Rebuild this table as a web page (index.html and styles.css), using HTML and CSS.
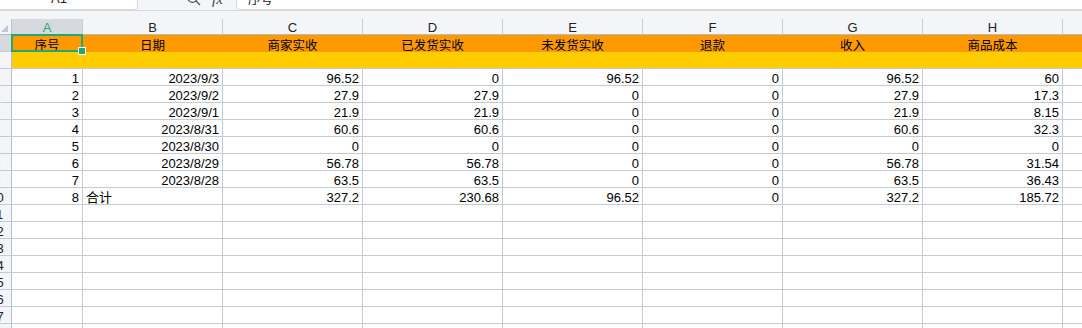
FILE: index.html
```html
<!DOCTYPE html>
<html lang="zh-CN">
<head>
    <meta charset="UTF-8">
    <meta name="viewport" content="width=device-width, initial-scale=1.0">
    <title>销售汇总</title>
    <link rel="stylesheet" href="styles.css">
</head>
<body>
    <!-- name box + formula input -->
    <div class="formula-bar">
        <div class="name-box">
            <span class="name-ref">A1</span>
            <svg class="name-arrow" width="8" height="6" viewBox="0 0 8 6"><path d="M1 1 L4 4 L7 1" fill="none" stroke="#777" stroke-width="1"/></svg>
        </div>
        <svg class="icon-search" width="16" height="16" viewBox="0 0 16 16">
            <circle cx="6.5" cy="6.5" r="4.8" fill="none" stroke="#555" stroke-width="1.2"/>
            <path d="M10 10 L14 14" stroke="#555" stroke-width="1.3"/>
        </svg>
        <span class="icon-fx">fx</span>
        <div class="formula-input">序号</div>
    </div>
    <div class="bar-gap"></div>

    <div class="sheet" id="sheet"></div>

    <script>
        var letters = ['A','B','C','D','E','F','G','H','I'];
        var titles = ['序号','日期','商家实收','已发货实收','未发货实收','退款','收入','商品成本',''];
        var rows = [
            ['1','2023/9/3','96.52','0','96.52','0','96.52','60'],
            ['2','2023/9/2','27.9','27.9','0','0','27.9','17.3'],
            ['3','2023/9/1','21.9','21.9','0','0','21.9','8.15'],
            ['4','2023/8/31','60.6','60.6','0','0','60.6','32.3'],
            ['5','2023/8/30','0','0','0','0','0','0'],
            ['6','2023/8/29','56.78','56.78','0','0','56.78','31.54'],
            ['7','2023/8/28','63.5','63.5','0','0','63.5','36.43'],
            ['8','合计','327.2','230.68','96.52','0','327.2','185.72']
        ];

        var sheet = document.getElementById('sheet');

        function addCell(cls, text) {
            var d = document.createElement('div');
            d.className = 'cell ' + cls;
            if (text) d.textContent = text;
            sheet.appendChild(d);
            return d;
        }

        // corner + column letters
        var corner = addCell('corner', '');
        corner.innerHTML = '<span class="corner-tri"></span>';
        for (var i = 0; i < letters.length; i++) {
            addCell(i == 0 ? 'colhead active' : 'colhead', letters[i]);
        }

        // row 1: titles, A1 is the active cell
        addCell('rowhead active', '1');
        for (var i = 0; i < titles.length; i++) {
            var t = addCell(i == 0 ? 'title current' : 'title', titles[i]);
            if (i == 0) {
                var sel = document.createElement('span');
                sel.className = 'selection';
                sel.innerHTML = '<span class="fill-handle"></span>';
                t.appendChild(sel);
            }
        }

        // row 2: blank band
        addCell('rowhead', '2');
        for (var i = 0; i < letters.length; i++) {
            addCell('band', '');
        }

        // data rows
        for (var r = 0; r < 16; r++) {
            addCell('rowhead', String(r + 3));
            var data = rows[r] || [];
            for (var c = 0; c < letters.length; c++) {
                var val = data[c] || '';
                var isText = val != '' && isNaN(val) && val.indexOf('/') < 0;
                addCell(isText ? 'text' : '', val);
            }
        }
    </script>
</body>
</html>
```

FILE: styles.css
```css
body{
    margin: 0;
    overflow: hidden;
    background: #fff;
    font-family: "Liberation Sans", "Noto Sans CJK SC", sans-serif;
    font-size: 13px;
    color: #000;
}

/* formula bar (scrolled so only its lower edge shows) */
.formula-bar{
    height: 10px;
    display: flex;
    align-items: center;
    overflow: hidden;
    background: #f4f5f7;
    border-bottom: 1px solid #d6d9df;
}
.name-box{
    box-sizing: border-box;
    flex: none;
    width: 148px;
    height: 20px;
    margin-left: -10px;
    margin-top: -10px;
    padding-left: 60px;
    padding-right: 2px;
    padding-bottom: 4px;
    display: flex;
    align-items: center;
    background: #fff;
    border: 1px solid #d3d6dc;
    border-radius: 4px;
    color: #222;
}
.name-arrow{
    margin-left: auto;
    margin-top: 0;
}
.icon-search{
    flex: none;
    margin-left: 48px;
    margin-top: -13px;
}
.icon-fx{
    flex: none;
    width: 14px;
    margin-left: 10px;
    margin-top: -11px;
    font-family: "Liberation Serif", serif;
    font-style: italic;
    font-size: 15px;
    color: #444;
}
.formula-input{
    box-sizing: border-box;
    flex: 1;
    height: 20px;
    margin-left: 10px;
    margin-right: -10px;
    margin-top: -10px;
    padding-left: 11px;
    padding-bottom: 3px;
    display: flex;
    align-items: center;
    background: #fff;
    border: 1px solid #d3d6dc;
    border-radius: 4px;
    font-family: "Noto Sans CJK SC", sans-serif;
    font-size: 12.5px;
    color: #222;
}
.bar-gap{
    height: 8px;
    background: #f4f5f7;
}

/* grid, scrolled a little to the right */
.sheet{
    display: grid;
    grid-template-columns: 30px 71px repeat(8, 140px);
    grid-template-rows: 16px;
    grid-auto-rows: 17px;
    margin-left: -18px;
}
.cell{
    box-sizing: border-box;
    padding: 2px 3px 0 3px;
    line-height: 16px;
    text-align: right;
    white-space: nowrap;
    overflow: hidden;
    border-right: 1px solid #c5cad8;
    border-bottom: 1px solid #c5cad8;
}
.text{
    text-align: left;
}
.corner{
    display: flex;
    justify-content: flex-end;
    align-items: flex-end;
    padding: 0 3px 2px 0;
    background: #f4f5f8;
    border-right: 1px solid #bcc2cf;
    border-bottom: 1px solid #b4bbc9;
}
.corner-tri{
    width: 0;
    height: 0;
    border-left: 7px solid transparent;
    border-bottom: 7px solid #c2c6cd;
}
.colhead{
    padding: 1px 0 0 0;
    line-height: 15px;
    text-align: center;
    background: #f4f5f8;
    color: #222;
    border-right: 1px solid #c9cdd7;
    border-bottom: 1px solid #b4bbc9;
}
.rowhead{
    padding: 2px 0 0 0;
    text-align: center;
    background: #f4f5f8;
    color: #222;
    border-right: 1px solid #b8bfcc;
}
.active{
    background: #d6d9df;
}
.colhead.active{
    color: #2aa876;
}
.title{
    text-align: center;
    font-family: "Noto Sans CJK SC", sans-serif;
    font-size: 12.5px;
    background: #ff9900;
    border-right-color: transparent;
    border-bottom-color: transparent;
}
.band{
    background: #ffcc00;
    border-right-color: transparent;
}

/* active cell A1 */
.current{
    position: relative;
    z-index: 2;
    overflow: visible;
}
.selection{
    position: absolute;
    top: -1px;
    left: -1px;
    right: -1px;
    bottom: -1px;
    border: 2px solid #22a873;
}
.fill-handle{
    position: absolute;
    right: -5px;
    bottom: -5px;
    width: 6px;
    height: 6px;
    background: #22a873;
    border: 1px solid #fff;
}
```
